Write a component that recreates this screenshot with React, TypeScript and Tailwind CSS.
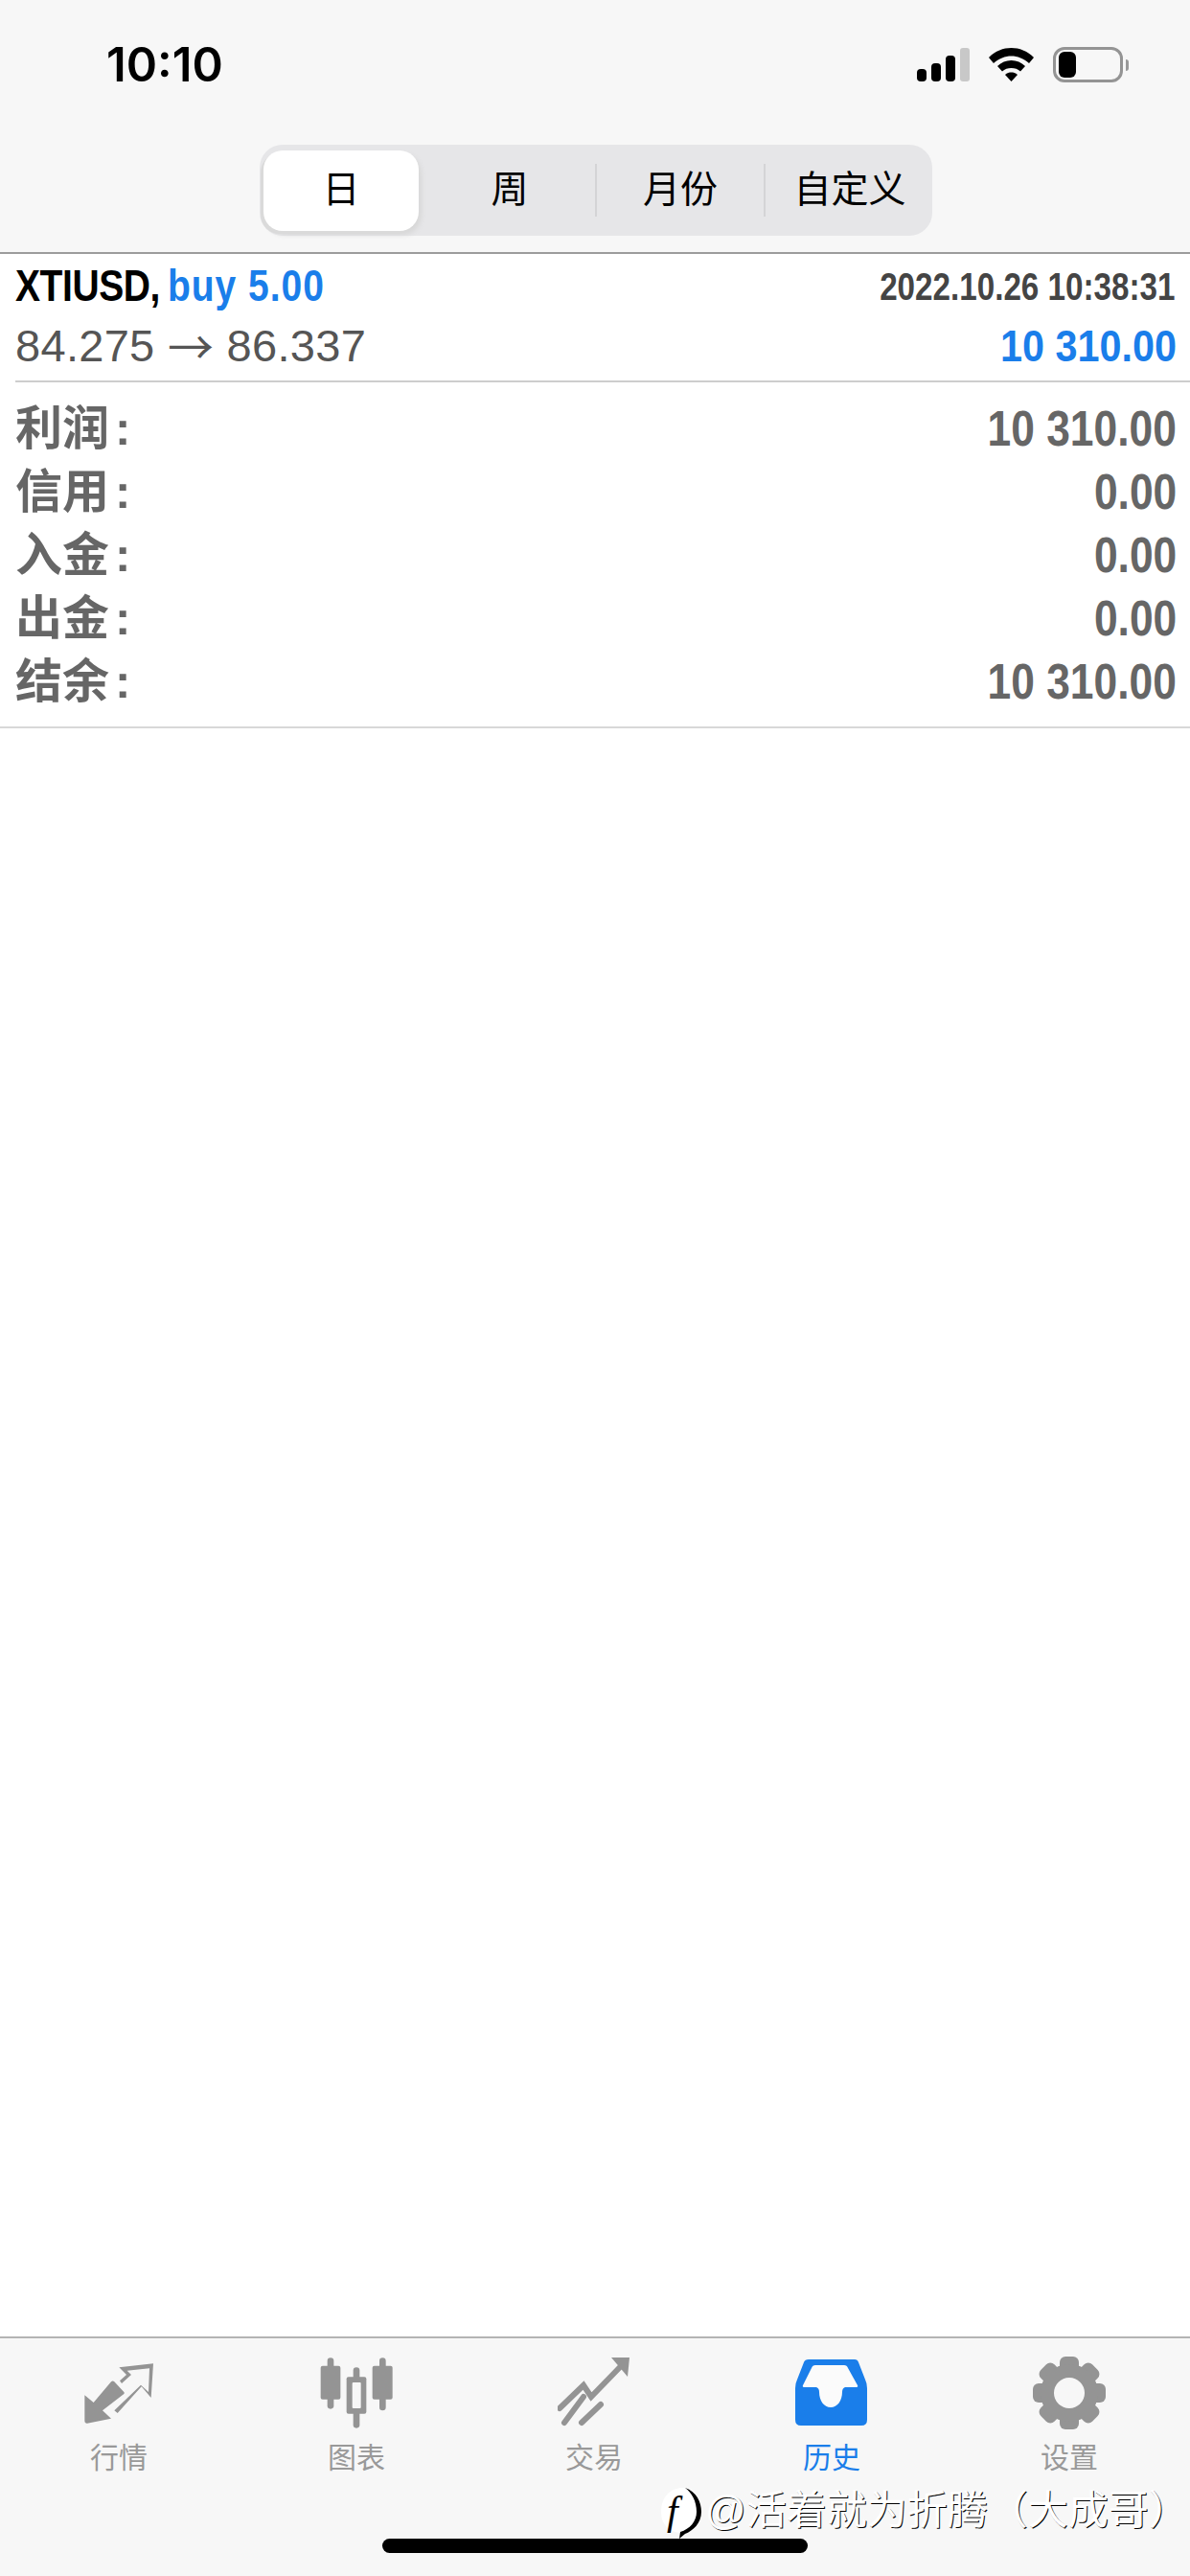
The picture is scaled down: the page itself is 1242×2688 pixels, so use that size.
const TABS = ["日", "周", "月份", "自定义"];

const SUMMARY = [
  ["利润", "10 310.00"],
  ["信用", "0.00"],
  ["入金", "0.00"],
  ["出金", "0.00"],
  ["结余", "10 310.00"],
];

const StatusIcons = () => (
  <div className="flex items-start">
    <svg width="55" height="35" viewBox="0 0 55 35">
      <rect x="0" y="22" width="10" height="13" rx="4" fill="#000" />
      <rect x="15" y="16" width="10" height="19" rx="4" fill="#000" />
      <rect x="30" y="8" width="10" height="27" rx="4" fill="#000" />
      <rect x="45" y="0" width="10" height="35" rx="3" fill="#c8c8c8" />
    </svg>
    <svg className="ml-[20px]" width="47" height="35" viewBox="0 0 47 35">
      <path d="M23.500 0C32 0 40 3 47 10L42 16C36.500 11 30 8.500 23.500 8.500S10.500 11 5 16L0 10C7 3 15 0 23.500 0Z" fill="#000" />
      <path d="M23.500 13C29 13 34 15 38 19L33 24.500C30.500 22 27 21 23.500 21S16.500 22 14 24.500L9 19C13 15 18 13 23.500 13Z" fill="#000" />
      <path d="M23.500 25.500C25.500 25.500 28 26 30 28L23.500 35L17 28C19 26 21.500 25.500 23.500 25.500Z" fill="#000" />
    </svg>
    <div className="mt-[-1px] ml-[20px] flex items-center">
      <div className="flex h-[37px] w-[73px] items-center rounded-[12px] border-[3px] border-[#949494] pl-[3px]">
        <div className="h-[27px] w-[18px] rounded-[6px] bg-black" />
      </div>
      <div className="ml-[3px] h-[12px] w-[3px] rounded-r-full bg-[#999]" />
    </div>
  </div>
);

const MarketIcon = () => (
  <svg width="76" height="76" viewBox="0 0 228 228">
    <path
      d="M7 121L7 202Q7 210 15 209L90 194L63 169L130 117Q133 114 130 111L100 79Q95 74 90 79L35 144Z"
      fill="#949494"
    />
    <path
      d="M115 34L222 22L215 129L185 94L110 177L100 169L183 89L207 111L210 37L140 44L153 57L123 84L117 76L138 57Z"
      fill="#949494"
    />
  </svg>
);

const ChartIcon = () => (
  <svg width="76" height="76" viewBox="0 0 228 228" fill="#949494">
    <rect x="23" y="4" width="20" height="160" rx="10" />
    <rect x="2" y="29" width="62" height="105" rx="6" />
    <rect x="104" y="34" width="20" height="190" rx="10" />
    <rect x="83" y="64" width="62" height="115" rx="6" />
    <rect x="101" y="81" width="27" height="81" rx="3" fill="#f7f7f7" />
    <rect x="186" y="4" width="20" height="165" rx="10" />
    <rect x="164" y="29" width="63" height="105" rx="6" />
  </svg>
);

const TradeIcon = () => (
  <svg width="76" height="76" viewBox="0 0 76 76">
    <g fill="none" stroke="#949494" strokeWidth="6" strokeLinecap="round" strokeLinejoin="miter">
      <path d="M2 54L27 30L35 42L68 8" />
      <path d="M7 69L27 42" />
      <path d="M25 69L45 50" />
    </g>
    <path d="M56 1L75 1L73 21Z" fill="#949494" />
  </svg>
);

const HistoryIcon = () => (
  <svg width="76" height="76" viewBox="0 0 76 76">
    <path
      d="M14 3H62Q65 3 66 6L73 24Q75 28 75 33V66Q75 72 69 72H6Q0 72 0 66V33Q0 28 2 24L9 6Q10 3 14 3Z"
      fill="#1a7eea"
    />
    <path
      d="M21 9H51Q54 9 55 12L65 30Q66 32 63 32H52Q49 33 49 37C49 46 44 53 37 53C30 53 25 46 25 37Q25 33 22 32H10Q7 32 8 30L17 12Q18 9 21 9Z"
      fill="#fbfbfb"
    />
  </svg>
);

const GearIcon = () => (
  <svg width="76" height="76" viewBox="0 0 76 76" fill="#949494">
    {[0, 45, 90, 135, 180, 225, 270, 315].map((deg) => (
      <rect key={deg} x="28" y="0" width="20" height="18" rx="6" transform={`rotate(${deg} 38 38)`} />
    ))}
    <circle cx="38" cy="38" r="30" />
    <circle cx="38" cy="38" r="16" fill="#f7f7f7" />
  </svg>
);

const NAV = [
  { label: "行情", icon: <MarketIcon /> },
  { label: "图表", icon: <ChartIcon /> },
  { label: "交易", icon: <TradeIcon /> },
  { label: "历史", icon: <HistoryIcon />, active: true },
  { label: "设置", icon: <GearIcon /> },
];

export default function App() {
  return (
    <div className="relative flex h-[2688px] w-[1242px] flex-col overflow-hidden bg-white font-['Liberation_Sans','Noto_Sans_CJK_SC',sans-serif]">
      <header className="h-[265px] border-b-2 border-[#9c9c9c] bg-[#f7f7f7]">
        <div className="flex h-[151px] items-start justify-between pt-[50px] pr-[64px] pl-[111px]">
          <span className="font-['Inter',sans-serif] text-[49px] leading-[35px] font-semibold text-black">
            10:10
          </span>
          <StatusIcons />
        </div>
        <div className="ml-[271px] flex h-[95px] w-[702px] items-center rounded-[24px] bg-[#e6e6e8] text-[39px] text-black">
          {TABS.map((tab, i) => (
            <div
              key={tab}
              className={
                i === 0
                  ? "ml-[4px] flex h-[84px] w-[162px] items-center justify-center rounded-[20px] bg-white shadow-[-3px_3px_0_#dadada,3px_4px_5px_#d8d8d8]"
                  : i === 1
                    ? "flex h-full w-[184px] items-center justify-center pl-[6px]"
                    : i === 2
                      ? "flex h-[55px] w-[178px] items-center justify-center border-x-2 border-[#d4d4d6]"
                      : "flex h-full flex-1 items-center justify-center pl-[2px]"
              }
            >
              {tab}
            </div>
          ))}
        </div>
      </header>

      <main className="flex-1">
        <section className="border-b-2 border-[#d8d8d8] pb-[13px]">
          <div className="ml-[16px] border-b-2 border-[#cdcdcd] pt-[2px] pb-[4px]">
            <div className="flex h-[63px] items-center justify-between pr-[16px] whitespace-nowrap">
              <span className="inline-block origin-left scale-x-[.83] text-[47px] font-bold tracking-[-.5px] text-black">
                XTIUSD, <span className="ml-[-3px] tracking-[1.2px] text-[#1a7eea]">buy 5.00</span>
              </span>
              <span className="inline-block origin-right scale-x-[.83] text-[40px] font-bold text-[#444]">
                2022.10.26 10:38:31
              </span>
            </div>
            <div className="flex h-[63px] items-center justify-between pr-[14px] whitespace-nowrap">
              <span className="text-[47px] tracking-[.3px] text-[#555]">
                84.275 <span className="relative top-[3px] font-['Noto_Sans_CJK_SC',sans-serif] text-[48px] leading-none">→</span> 86.337
              </span>
              <span className="inline-block origin-right scale-x-[.88] text-[47px] font-bold text-[#1a7eea]">
                10 310.00
              </span>
            </div>
          </div>
          <div className="pt-[16px]">
            {SUMMARY.map(([label, value]) => (
              <div key={label} className="flex h-[66px] items-center justify-between pr-[14px] pl-[16px] font-bold text-[#666]">
                <span className="text-[49px]">
                  {label}
                  <span className="ml-[6px]">:</span>
                </span>
                <span className="inline-block origin-right scale-x-[.87] text-[51px] whitespace-nowrap">{value}</span>
              </div>
            ))}
          </div>
        </section>
      </main>

      <nav className="h-[250px] border-t-2 border-[#b4b4b4] bg-[#f7f7f7]">
        <div className="grid grid-cols-5 pt-[19px] pr-[2px]">
          {NAV.map((item) => (
            <div key={item.label} className="flex flex-col items-center">
              {item.icon}
              <span
                className={
                  item.active
                    ? "mt-[12px] text-[30px] leading-[36px] text-[#1a7eea]"
                    : "mt-[12px] text-[30px] leading-[36px] text-[#999]"
                }
              >
                {item.label}
              </span>
            </div>
          ))}
        </div>
      </nav>

      <div className="absolute top-[2649px] left-[399px] h-[15px] w-[444px] rounded-full bg-black" />

      <div className="absolute top-[2595px] left-[689px] flex items-start">
        <svg width="44" height="54" viewBox="0 0 44 54">
          <path d="M24 1C10 1 1 11 1 26C1 40 10 48 24 48C34 48 40 38 40 26C40 12 34 1 24 1Z" fill="#fff" />
          <path d="M26 1C38 5 43 16 43 26C43 38 34 46 26 49L20 54L21 47C31 44 38 36 38 26C38 15 33 6 26 1Z" fill="#000" />
          <text x="7" y="39" fontSize="42" fontStyle="italic" fill="#000" fontFamily="Liberation Serif, serif">f</text>
        </svg>
        <span className="ml-[3px] text-[42px] leading-[50px] whitespace-nowrap text-white [text-shadow:1px_1px_0_#000]">
          @活着就为折腾（大成哥）
        </span>
      </div>
    </div>
  );
}
